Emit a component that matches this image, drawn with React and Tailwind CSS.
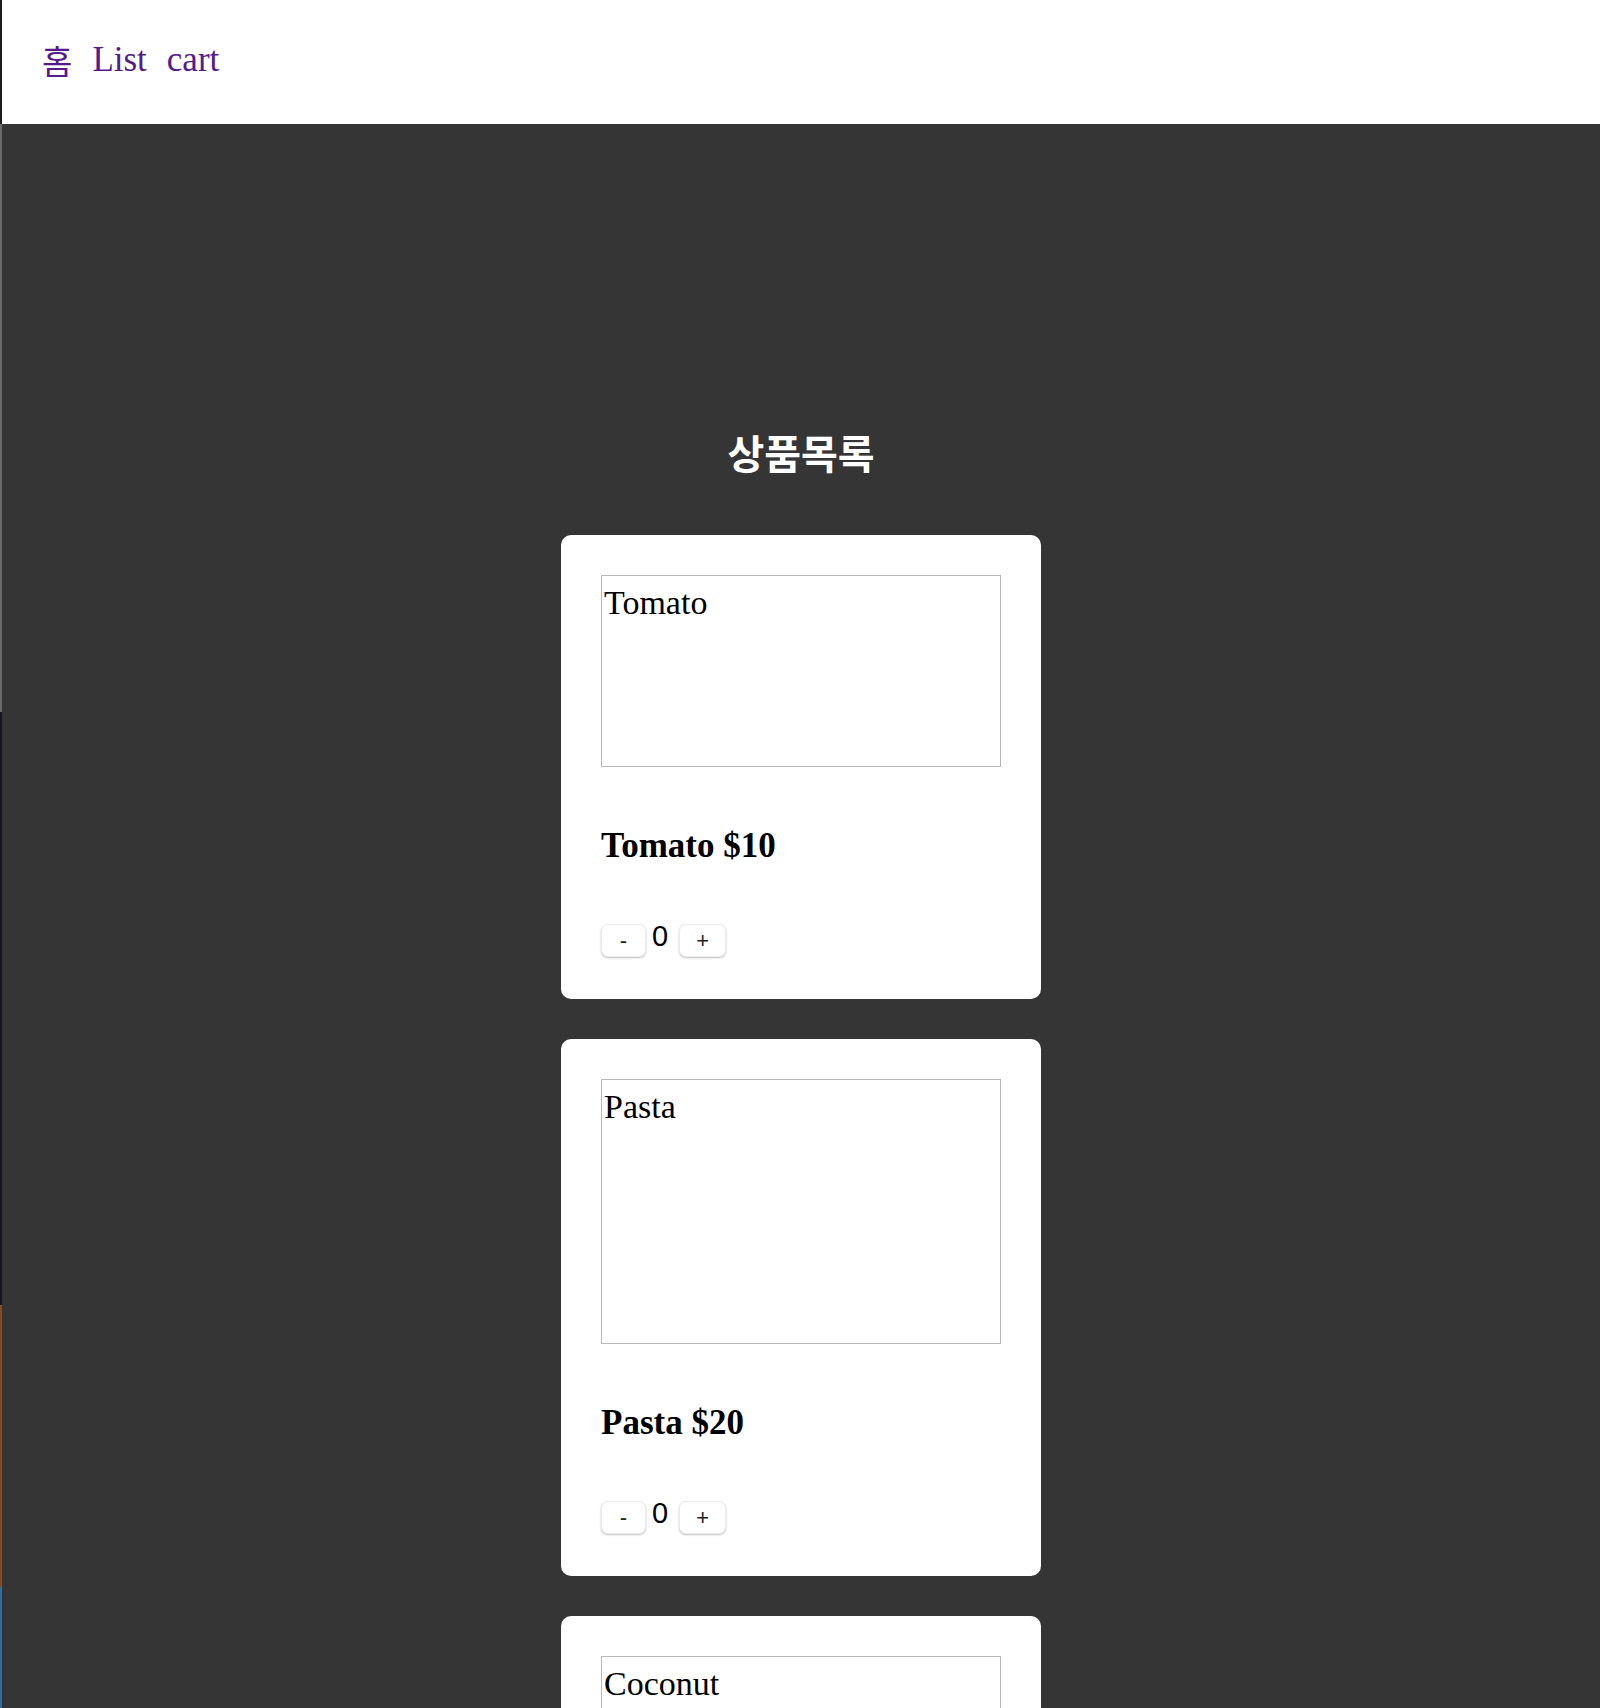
import { useState } from 'react';

const PRODUCTS = [
  { id: 1, name: 'Tomato', price: 10, imgH: 'h-[192px]' },
  { id: 2, name: 'Pasta', price: 20, imgH: 'h-[265px]' },
  { id: 3, name: 'Coconut', price: 30, imgH: 'h-[265px]' },
];

const serif = "font-['Liberation_Serif','Noto_Sans_CJK_KR',serif]";

function ProductCard({ product }) {
  const [count, setCount] = useState(0);

  return (
    <div className="w-[480px] bg-white rounded-[10px] pt-[40px] pb-[42px] px-[40px]">
      <div className={`w-[400px] ${product.imgH} border border-[#b8b8b8] pl-[2px] pt-[10px] text-[34px] leading-none text-black ${serif}`}>
        {product.name}
      </div>
      <h4 className={`mt-[61px] text-[35px] leading-none font-bold text-black ${serif}`}>
        {product.name} ${product.price}
      </h4>
      <div className="mt-[61px] flex items-start font-['Liberation_Sans',sans-serif]">
        <button
          onClick={() => setCount((c) => Math.max(0, c - 1))}
          className="w-[45px] h-[33px] rounded-[7px] bg-white border border-[#ececec] shadow-[0_1px_2px_rgba(0,0,0,0.25)] text-[22px] leading-none text-[#222]"
        >
          -
        </button>
        <span className="ml-[6px] mr-[11px] -mt-[2px] text-[29px] leading-none text-black">{count}</span>
        <button
          onClick={() => setCount((c) => c + 1)}
          className="w-[47px] h-[33px] rounded-[7px] bg-white border border-[#ececec] shadow-[0_1px_2px_rgba(0,0,0,0.25)] text-[22px] leading-none text-[#222]"
        >
          +
        </button>
      </div>
    </div>
  );
}

export default function App() {
  return (
    <div className="flex h-[1708px] overflow-hidden bg-[#353535]">
      {/* edge of the window behind */}
      <div className="w-[2px] flex flex-col shrink-0">
        <div className="h-[124px] bg-[#1c1c1c]" />
        <div className="h-[588px] bg-[#6a6a6a]" />
        <div className="h-[593px] bg-[#15151f]" />
        <div className="h-[282px] bg-[#8a4a1e]" />
        <div className="flex-1 bg-[#2a6fa3]" />
      </div>

      <div className="flex-1 flex flex-col">
        <nav className={`h-[124px] shrink-0 bg-white flex items-start pt-[42px] pl-[40px] gap-[20px] text-[35px] leading-none text-[#551a8b] ${serif}`}>
          <a href="#" className="font-['Noto_Sans_CJK_KR',sans-serif] text-[33px] leading-none mt-[2px]">홈</a>
          <a href="#">List</a>
          <a href="#">cart</a>
        </nav>

        <main className="flex-1 flex flex-col items-center pt-[308px]">
          <h2 className="text-[40px] leading-none font-bold text-white font-['Noto_Sans_CJK_KR',sans-serif]">
            상품목록
          </h2>
          <div className="mt-[63px] flex flex-col gap-[40px]">
            {PRODUCTS.map((p) => (
              <ProductCard key={p.id} product={p} />
            ))}
          </div>
        </main>
      </div>
    </div>
  );
}
